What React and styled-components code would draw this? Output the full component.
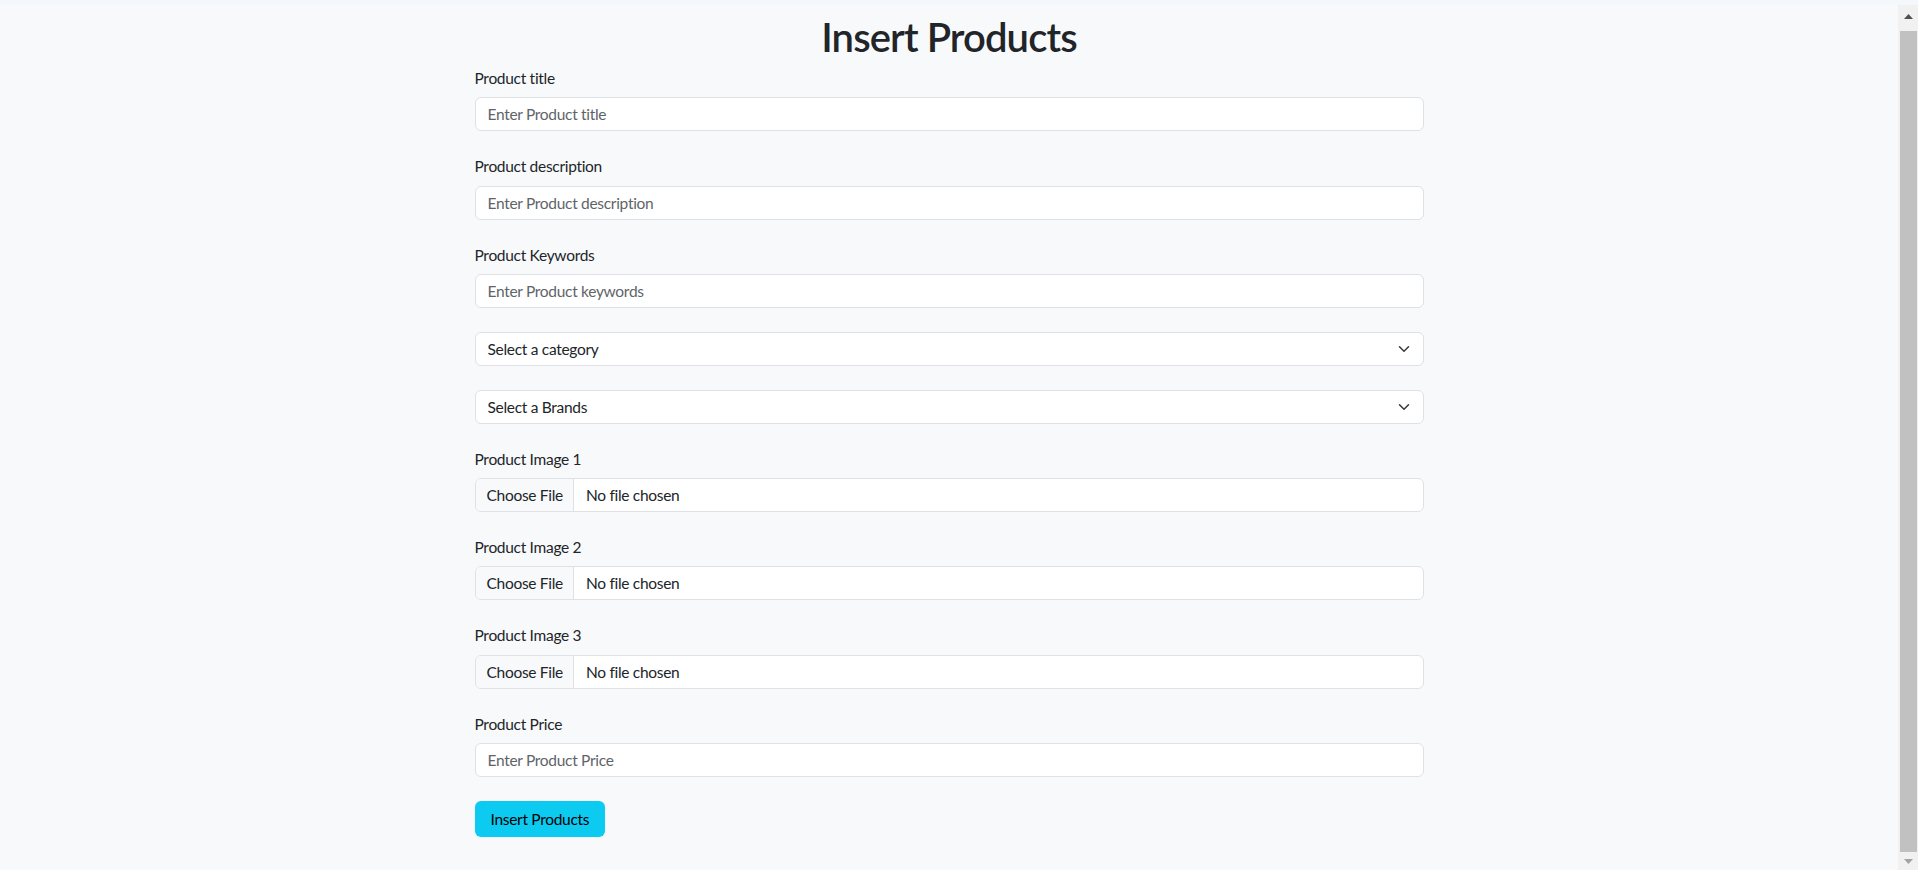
import React from "react";
import styled, { createGlobalStyle } from "styled-components";

const fields = [
  { type: "text", label: "Product title", placeholder: "Enter Product title" },
  { type: "text", label: "Product description", placeholder: "Enter Product description" },
  { type: "text", label: "Product Keywords", placeholder: "Enter Product keywords" },
  { type: "select", value: "Select a category" },
  { type: "select", value: "Select a Brands" },
  { type: "file", label: "Product Image 1" },
  { type: "file", label: "Product Image 2" },
  { type: "file", label: "Product Image 3" },
  { type: "text", label: "Product Price", placeholder: "Enter Product Price" },
];

const Chevron = () => (
  <svg width="16" height="12" viewBox="0 0 16 16" fill="none">
    <path
      d="m2 5 6 6 6-6"
      stroke="#343a40"
      strokeWidth="2"
      strokeLinecap="round"
      strokeLinejoin="round"
    />
  </svg>
);

const Arrow = ({ down, color }) => (
  <svg width="9" height="5" viewBox="0 0 9 5">
    <polygon points={down ? "0,0 9,0 4.5,5" : "0,5 4.5,0 9,5"} fill={color} />
  </svg>
);

const App = () => {
  return (
    <Page>
      <GlobalStyle />
      <TopStrip />
      <Viewport>
        <Main>
          <Title>Insert Products</Title>
          <Form onSubmit={(e) => e.preventDefault()}>
            {fields.map((field, index) => (
              <Field key={index}>
                {field.label && <Label>{field.label}</Label>}
                {field.type === "text" && (
                  <TextInput type="text" placeholder={field.placeholder} />
                )}
                {field.type === "select" && (
                  <SelectBox>
                    <span>{field.value}</span>
                    <Chevron />
                  </SelectBox>
                )}
                {field.type === "file" && (
                  <FileBox>
                    <FileButton>Choose File</FileButton>
                    <FileName>No file chosen</FileName>
                  </FileBox>
                )}
              </Field>
            ))}
            <SubmitButton type="submit">Insert Products</SubmitButton>
          </Form>
        </Main>
        <ScrollTrack>
          <ScrollButton $h={23}>
            <Arrow color="#505050" />
          </ScrollButton>
          <ScrollThumb />
          <ScrollButton $h={18}>
            <Arrow down color="#a3a3a3" />
          </ScrollButton>
        </ScrollTrack>
      </Viewport>
    </Page>
  );
};

const font = `Lato, "Liberation Sans", sans-serif`;

const GlobalStyle = createGlobalStyle`
  html, body {
    margin: 0;
    height: 100%;
    overflow: hidden;
  }
  body {
    background: #f8f9fa;
    color: #212529;
    font-family: ${font};
  }
  #root {
    height: 100%;
  }
`;

const Page = styled.div`
  height: 100vh;
  display: flex;
  flex-direction: column;
  background: #f8f9fa;
`;

const TopStrip = styled.div`
  height: 5px;
  flex-shrink: 0;
  background: #f4f8fc;
`;

const Viewport = styled.div`
  flex: 1;
  display: flex;
  min-height: 0;
`;

const Main = styled.main`
  flex: 1;
  min-width: 0;
`;

const Title = styled.h1`
  margin: 8px 0 6px;
  text-align: center;
  font-size: 40px;
  font-weight: 600;
  letter-spacing: -0.9px;
  line-height: 48px;
  color: #212529;
`;

const Form = styled.form`
  width: 50%;
  margin: 0 auto;
`;

const Field = styled.div`
  margin-bottom: 24px;
`;

const Label = styled.label`
  display: block;
  font-size: 15.5px;
  letter-spacing: -0.3px;
  line-height: 22px;
  margin-bottom: 8.25px;
`;

const boxBase = `
  box-sizing: border-box;
  width: 100%;
  height: 34px;
  border: 1px solid #dee2e6;
  border-radius: 6px;
  background: #fff;
  font-family: ${font};
  font-size: 15.5px;
  letter-spacing: -0.3px;
  color: #212529;
`;

const TextInput = styled.input`
  ${boxBase}
  display: block;
  padding: 0 12px;
  outline: none;

  &::placeholder {
    color: #5f6469;
  }
`;

const SelectBox = styled.div`
  ${boxBase}
  display: flex;
  align-items: center;
  justify-content: space-between;
  padding: 0 11px 0 12px;
`;

const FileBox = styled.div`
  ${boxBase}
  display: flex;
  align-items: stretch;
  overflow: hidden;
`;

const FileButton = styled.span`
  display: flex;
  align-items: center;
  padding: 0 10px 0 11px;
  background: #f8f9fa;
  border-right: 1px solid #dee2e6;
`;

const FileName = styled.span`
  display: flex;
  align-items: center;
  margin-left: 12px;
`;

const SubmitButton = styled.button`
  height: 36px;
  padding: 0 16px;
  border: none;
  border-radius: 6px;
  background: #0dcaf0;
  color: #000;
  font-family: ${font};
  font-size: 15.5px;
  letter-spacing: -0.3px;
  cursor: pointer;
`;

const ScrollTrack = styled.div`
  width: 20px;
  flex-shrink: 0;
  display: flex;
  flex-direction: column;
  background: #f1f1f1;
`;

const ScrollButton = styled.div`
  height: ${(p) => p.$h}px;
  flex-shrink: 0;
  display: flex;
  align-items: center;
  justify-content: center;
`;

const ScrollThumb = styled.div`
  flex: 1;
  margin: 3px 1px 0 2px;
  background: #c1c1c1;
`;

export default App;
